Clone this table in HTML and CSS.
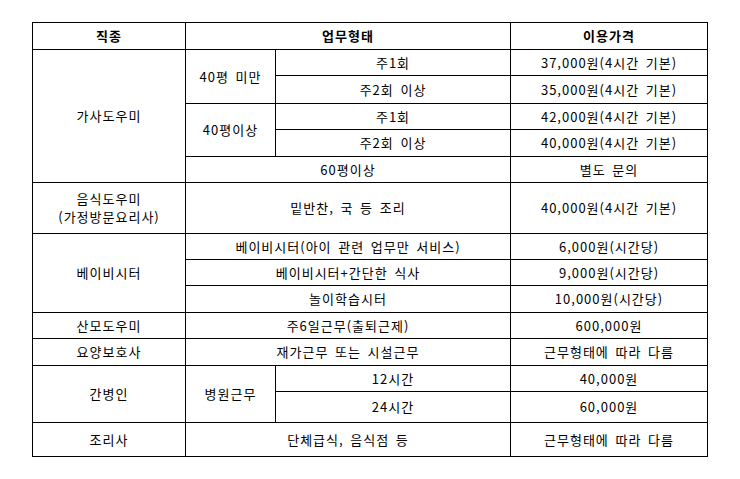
FILE: index.html
```html
<!DOCTYPE html>
<html lang="ko">
<head>
<meta charset="utf-8">
<title>이용가격</title>
<link rel="stylesheet" href="styles.css">
</head>
<body>
<div class="price-table" role="table">
  <div class="cell head">직종</div>
  <div class="cell head span-c2">업무형태</div>
  <div class="cell head">이용가격</div>

  <div class="cell span-r5">가사도우미</div>
  <div class="cell span-r2">40평 미만</div>
  <div class="cell">주1회</div>
  <div class="cell">37,000원(4시간 기본)</div>
  <div class="cell">주2회 이상</div>
  <div class="cell">35,000원(4시간 기본)</div>
  <div class="cell span-r2">40평이상</div>
  <div class="cell">주1회</div>
  <div class="cell">42,000원(4시간 기본)</div>
  <div class="cell">주2회 이상</div>
  <div class="cell">40,000원(4시간 기본)</div>
  <div class="cell span-c2">60평이상</div>
  <div class="cell">별도 문의</div>

  <div class="cell multi">음식도우미<br>(가정방문요리사)</div>
  <div class="cell span-c2">밑반찬, 국 등 조리</div>
  <div class="cell">40,000원(4시간 기본)</div>

  <div class="cell span-r3">베이비시터</div>
  <div class="cell span-c2">베이비시터(아이 관련 업무만 서비스)</div>
  <div class="cell">6,000원(시간당)</div>
  <div class="cell span-c2">베이비시터+간단한 식사</div>
  <div class="cell">9,000원(시간당)</div>
  <div class="cell span-c2">놀이학습시터</div>
  <div class="cell">10,000원(시간당)</div>

  <div class="cell">산모도우미</div>
  <div class="cell span-c2">주6일근무(출퇴근제)</div>
  <div class="cell">600,000원</div>

  <div class="cell">요양보호사</div>
  <div class="cell span-c2">재가근무 또는 시설근무</div>
  <div class="cell">근무형태에 따라 다름</div>

  <div class="cell span-r2">간병인</div>
  <div class="cell span-r2">병원근무</div>
  <div class="cell">12시간</div>
  <div class="cell">40,000원</div>
  <div class="cell">24시간</div>
  <div class="cell">60,000원</div>

  <div class="cell">조리사</div>
  <div class="cell span-c2">단체급식, 음식점 등</div>
  <div class="cell">근무형태에 따라 다름</div>
</div>
</body>
</html>
```

FILE: styles.css
```css
html, body {
  margin: 0;
  padding: 0;
  background: #fff;
}

body {
  padding: 22px 0 0 32px;
  font-family: "Noto Sans CJK KR", "Noto Sans", sans-serif;
  font-size: 13px;
  color: #000;
}

.price-table {
  display: grid;
  width: 676px;
  box-sizing: border-box;
  grid-template-columns: 152px 89px 234px 196px;
  grid-template-rows: 26px 25px 27px 25px 26px 25px 50px 25px 25px 26px 25px 26px 25px 30px 33px;
  gap: 1px;
  padding: 1px;
  background: #000;
}

.cell {
  background: #fff;
  display: flex;
  align-items: center;
  justify-content: center;
  text-align: center;
  line-height: 16px;
  letter-spacing: 1px;
  word-spacing: 2px;
  white-space: nowrap;
}

.head {
  font-weight: bold;
}

.multi {
  line-height: 18px;
}

.span-c2 {
  grid-column: span 2;
}

.span-r2 {
  grid-row: span 2;
}

.span-r3 {
  grid-row: span 3;
}

.span-r5 {
  grid-row: span 5;
}
```
